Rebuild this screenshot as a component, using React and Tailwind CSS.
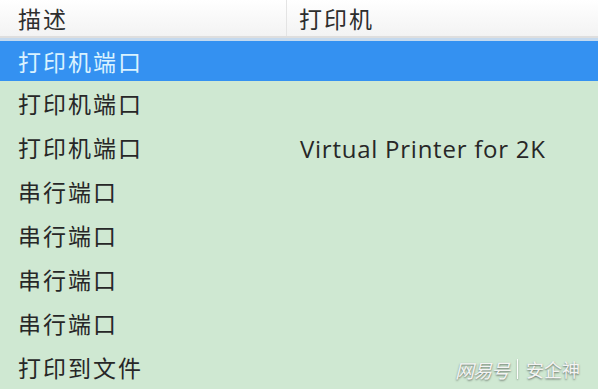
const rows = [
  { name: '打印机端口', printer: '' },
  { name: '打印机端口', printer: '' },
  { name: '打印机端口', printer: 'Virtual Printer for 2K' },
  { name: '串行端口', printer: '' },
  { name: '串行端口', printer: '' },
  { name: '串行端口', printer: '' },
  { name: '串行端口', printer: '' },
  { name: '打印到文件', printer: '' },
]

const cjk = { fontFamily: '"Noto Sans CJK SC", "Noto Sans", sans-serif' }

export default function App() {
  return (
    <div className="relative w-[598px] h-[389px] overflow-hidden bg-[#cfe8d2]" style={cjk}>
      {/* header */}
      <div className="flex h-[36px] bg-gradient-to-b from-white to-[#f3f3f3] text-[23px] text-[#2e2e2e] leading-none">
        <div className="w-[287px] flex items-center pl-[18px] tracking-[2px] border-r border-[#e4e4e4]">描述</div>
        <div className="flex-1 flex items-center pl-[12px] tracking-[2px]">打印机</div>
      </div>
      <div className="h-[2px] bg-[#dedede]" />
      <div className="h-[3px] bg-[#c4d9ee]" />

      {rows.map((r, i) => {
        const selected = i === 0
        return (
          <div
            key={i}
            className={
              selected
                ? 'flex items-center h-[40px] bg-[#3491f1] text-[#d9f2ff]'
                : 'flex items-center h-[44px] text-[#272727]'
            }
          >
            <div className="w-[287px] pl-[18px] text-[23px] tracking-[2px] leading-none">{r.name}</div>
            <div
              className="flex-1 pl-[13px] pt-[3px] text-[24px] tracking-[0.75px] leading-none"
              style={{ fontFamily: '"Open Sans", "Noto Sans", sans-serif' }}
            >
              {r.printer}
            </div>
          </div>
        )
      })}

      {/* watermark */}
      <div className="absolute right-[18px] bottom-[10px] flex items-center gap-[8px] text-[#f4f4f4] text-[19px] leading-none [text-shadow:0_1px_2px_rgba(0,0,0,0.55)]">
        <span className="italic tracking-[-1px]">网易号</span>
        <span className="w-[1px] h-[20px] bg-white shadow-[0_1px_2px_rgba(0,0,0,0.4)]" />
        <span className="text-[18px]">安企神</span>
      </div>
    </div>
  )
}
